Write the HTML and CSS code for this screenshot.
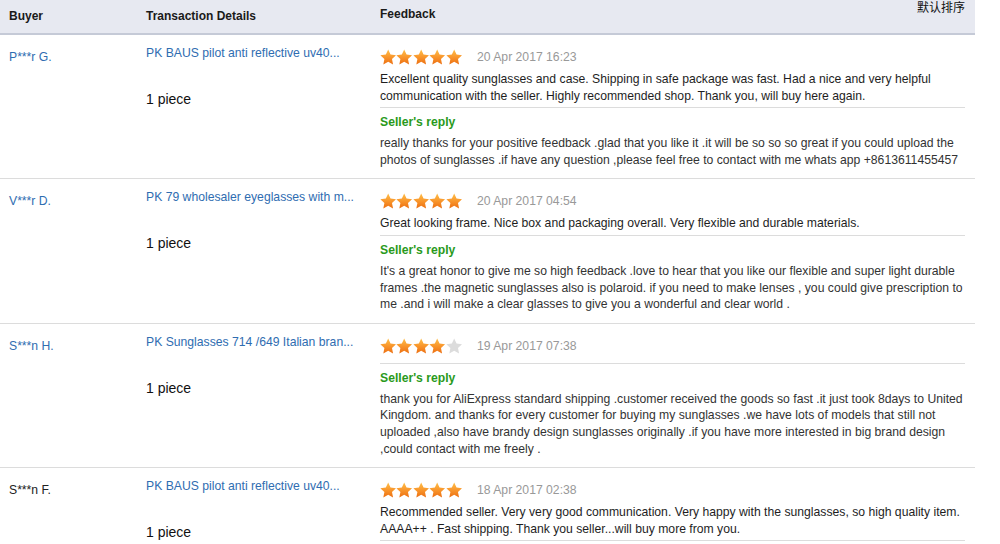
FILE: index.html
```html
<!DOCTYPE html>
<html lang="en">
<head>
  <meta charset="UTF-8">
  <meta name="viewport" content="width=device-width, initial-scale=1.0">
  <title>Buyer Feedback</title>
  <link rel="stylesheet" href="styles.css">
</head>
<body>
  <!-- shared star shape and fill -->
  <svg class="defs" width="0" height="0" aria-hidden="true">
    <defs>
      <linearGradient id="starFill" x1="0" y1="0" x2="0" y2="1">
        <stop offset="0" stop-color="#ffc04a"/>
        <stop offset="0.55" stop-color="#f8932a"/>
        <stop offset="1" stop-color="#ec6f12"/>
      </linearGradient>
      <symbol id="star" viewBox="0 0 16 16">
        <polygon points="8,0.4 10.35,5.46 15.89,6.14 11.8,9.94 12.88,15.41 8,12.7 3.12,15.41 4.2,9.94 0.11,6.14 5.65,5.46"/>
      </symbol>
    </defs>
  </svg>

  <div class="feedback-list">
    <div class="list-head">
      <div class="col-buyer">Buyer</div>
      <div class="col-item">Transaction Details</div>
      <div class="col-feedback">
        <span>Feedback</span>
        <span class="sort">默认排序</span>
      </div>
    </div>

    <div class="row">
      <div class="buyer"><a href="#">P***r G.</a></div>
      <div class="item">
        <a href="#" class="title">PK BAUS pilot anti reflective uv40...</a>
        <div class="qty">1 piece</div>
      </div>
      <div class="feedback">
        <div class="rating" data-stars="5">
          <span class="stars"></span>
          <span class="date">20 Apr 2017 16:23</span>
        </div>
        <p class="review">Excellent quality sunglasses and case. Shipping in safe package was fast. Had a nice and very helpful communication with the seller. Highly recommended shop. Thank you, will buy here again.</p>
        <div class="reply">
          <h4>Seller's reply</h4>
          <p>really thanks for your positive feedback .glad that you like it .it will be so so so great if you could upload the photos of sunglasses .if have any question ,please feel free to contact with me whats app +8613611455457</p>
        </div>
      </div>
    </div>

    <div class="row">
      <div class="buyer"><a href="#">V***r D.</a></div>
      <div class="item">
        <a href="#" class="title">PK 79 wholesaler eyeglasses with m...</a>
        <div class="qty">1 piece</div>
      </div>
      <div class="feedback">
        <div class="rating" data-stars="5">
          <span class="stars"></span>
          <span class="date">20 Apr 2017 04:54</span>
        </div>
        <p class="review">Great looking frame. Nice box and packaging overall. Very flexible and durable materials.</p>
        <div class="reply">
          <h4>Seller's reply</h4>
          <p>It's a great honor to give me so high feedback .love to hear that you like our flexible and super light durable frames .the magnetic sunglasses also is polaroid. if you need to make lenses , you could give prescription to me .and i will make a clear glasses to give you a wonderful and clear world .</p>
        </div>
      </div>
    </div>

    <div class="row">
      <div class="buyer"><a href="#">S***n H.</a></div>
      <div class="item">
        <a href="#" class="title">PK Sunglasses 714 /649 Italian bran...</a>
        <div class="qty">1 piece</div>
      </div>
      <div class="feedback">
        <div class="rating" data-stars="4">
          <span class="stars"></span>
          <span class="date">19 Apr 2017 07:38</span>
        </div>
        <div class="reply">
          <h4>Seller's reply</h4>
          <p>thank you for AliExpress standard shipping .customer received the goods so fast .it just took 8days to United Kingdom. and thanks for every customer for buying my sunglasses .we have lots of models that still not uploaded ,also have brandy design sunglasses originally .if you have more interested in big brand design ,could contact with me freely .</p>
        </div>
      </div>
    </div>

    <div class="row">
      <div class="buyer"><span class="plain">S***n F.</span></div>
      <div class="item">
        <a href="#" class="title">PK BAUS pilot anti reflective uv40...</a>
        <div class="qty">1 piece</div>
      </div>
      <div class="feedback">
        <div class="rating" data-stars="5">
          <span class="stars"></span>
          <span class="date">18 Apr 2017 02:38</span>
        </div>
        <p class="review">Recommended seller. Very very good communication. Very happy with the sunglasses, so high quality item. AAAA++ . Fast shipping. Thank you seller...will buy more from you.</p>
        <div class="reply"></div>
      </div>
    </div>
  </div>

  <script>
    // fill each rating with five stars, greying out the missing ones
    document.querySelectorAll('.rating').forEach(function (rating) {
      const count = parseInt(rating.dataset.stars, 10);
      const box = rating.querySelector('.stars');
      let html = '';
      for (let i = 0; i < 5; i++) {
        const cls = i < count ? 'star on' : 'star off';
        html += '<svg class="' + cls + '" viewBox="0 0 16 16"><use href="#star"/></svg>';
      }
      box.innerHTML = html;
    });
  </script>
</body>
</html>
```

FILE: styles.css
```css
body {
  margin: 0;
  background: #fff;
  font-family: "Liberation Sans", Arial, "Noto Sans CJK SC", sans-serif;
  font-size: 12.2px;
  color: #1e1e1e;
}
.defs {
  position: absolute;
  width: 0;
  height: 0;
}
a {
  color: #2f6db1;
  text-decoration: none;
}

.feedback-list {
  width: 975px;
}
.list-head,
.row {
  display: grid;
  grid-template-columns: 146px 234px 1fr;
}
.list-head {
  height: 33px;
  background: #e7e9f1;
  border-bottom: 2px solid #c5cad7;
  font-size: 12px;
  font-weight: bold;
  line-height: 14px;
  color: #1a1a1a;
}
.list-head .col-buyer {
  padding: 9px 0 0 9px;
}
.list-head .col-item {
  padding-top: 9px;
}
.list-head .col-feedback {
  display: flex;
  justify-content: space-between;
  align-items: flex-start;
  padding: 7px 10px 0 0;
}
.sort {
  font-weight: normal;
  margin-top: -6px;
  color: #111;
}

.row {
  border-bottom: 1px solid #dcdcdc;
}
.buyer {
  padding: 14px 0 0 9px;
  line-height: 16px;
}
.buyer .plain {
  color: #222;
}
.item {
  padding-top: 10px;
  line-height: 16px;
}
.item .title {
  display: block;
}
.qty {
  margin-top: 29px;
  font-size: 14px;
  line-height: 18px;
  color: #111;
}

.feedback {
  padding: 14px 10px 10px 0;
}
.rating {
  display: flex;
  align-items: center;
  height: 16px;
  padding-bottom: 6px;
}
.stars {
  display: flex;
  margin-right: 15px;
}
.star {
  width: 16.4px;
  height: 16px;
}
.star.on {
  fill: url(#starFill);
}
.star.off {
  fill: #dcdcdc;
}
.date {
  color: #999;
}
.review {
  margin: 0;
  line-height: 16.6px;
}
.reply {
  margin-top: 3px;
  border-top: 1px solid #dcdcdc;
  padding-top: 6px;
}
.reply h4 {
  margin: 0 0 4px;
  font-size: 12.2px;
  line-height: 17px;
  color: #2a9a1c;
}
.reply p {
  margin: 0;
  line-height: 16.6px;
  color: #333;
}
```
